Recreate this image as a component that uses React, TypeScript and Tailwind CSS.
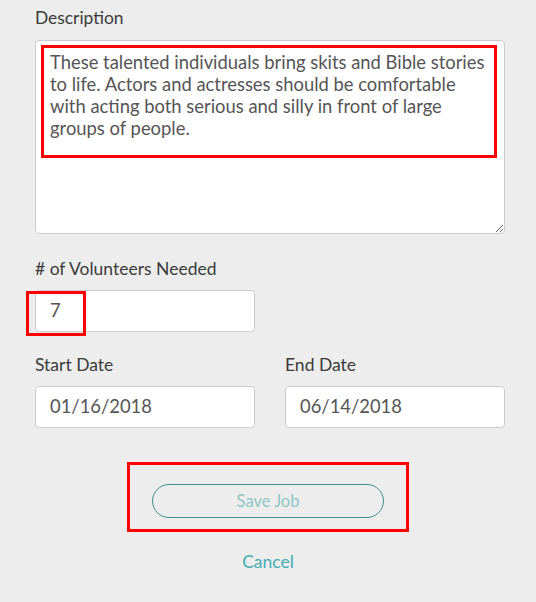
import React from "react";

export default function App() {
  const desc =
    "These talented individuals bring skits and Bible stories\nto life. Actors and actresses should be comfortable\nwith acting both serious and silly in front of large\ngroups of people.";
  return (
    <div className="min-h-screen w-[536px] h-[602px] overflow-hidden bg-[#ededed] font-['Lato','Noto_Sans',sans-serif] text-[#3b3b3b]">
      <div className="ml-[35px] w-[470px] pt-[7px]">
        <div className="text-[17.4px] leading-[22px]">Description</div>
        <div className="relative mt-[11px] h-[194px]">
          <textarea
            readOnly
            value={desc}
            className="block h-[194px] w-[470px] resize-y rounded-[4px] border border-[#cccccc] bg-white px-[14px] pt-[10px] text-[18.4px] leading-[22px] text-[#555555] whitespace-pre outline-none font-['Lato',sans-serif] overflow-hidden"
          />
          <div className="pointer-events-none absolute left-[6px] top-[5px] h-[113px] w-[456px] border-[3px] border-[#ff0000]" />
        </div>

        <div className="mt-[24px] text-[17.5px] leading-[22px]">
          # of Volunteers Needed
        </div>
        <div className="relative mt-[10px] h-[42px] w-[220px]">
          <div className="flex h-[42px] w-[220px] items-center rounded-[4px] border border-[#cccccc] bg-white px-[14px] text-[18.4px] text-[#555555]">
            7
          </div>
          <div className="pointer-events-none absolute left-[-9px] top-[1px] h-[45px] w-[60px] border-[3px] border-[#ff0000]" />
        </div>

        <div className="mt-[22px] flex gap-[30px]">
          <div className="w-[220px]">
            <div className="text-[17.5px] leading-[22px]">Start Date</div>
            <div className="mt-[10px] flex h-[42px] items-center rounded-[4px] border border-[#cccccc] bg-white px-[14px] text-[18.4px] text-[#555555]">
              01/16/2018
            </div>
          </div>
          <div className="w-[220px]">
            <div className="text-[17.5px] leading-[22px]">End Date</div>
            <div className="mt-[10px] flex h-[42px] items-center rounded-[4px] border border-[#cccccc] bg-white px-[14px] text-[18.4px] text-[#555555]">
              06/14/2018
            </div>
          </div>
        </div>
      </div>

      <div className="mt-[34px] flex flex-col items-center">
        <div className="flex h-[70px] w-[282px] justify-center border-[3px] border-[#ff0000] pt-[19px]">
          <div className="flex h-[34px] w-[232px] items-center justify-center rounded-full border border-[#3f8f8d] text-[16.5px] text-[#8ec6c6]">
            Save Job
          </div>
        </div>
        <div className="mt-[19px] text-[17.5px] leading-[22px] text-[#45adb2]">
          Cancel
        </div>
      </div>
    </div>
  );
}
